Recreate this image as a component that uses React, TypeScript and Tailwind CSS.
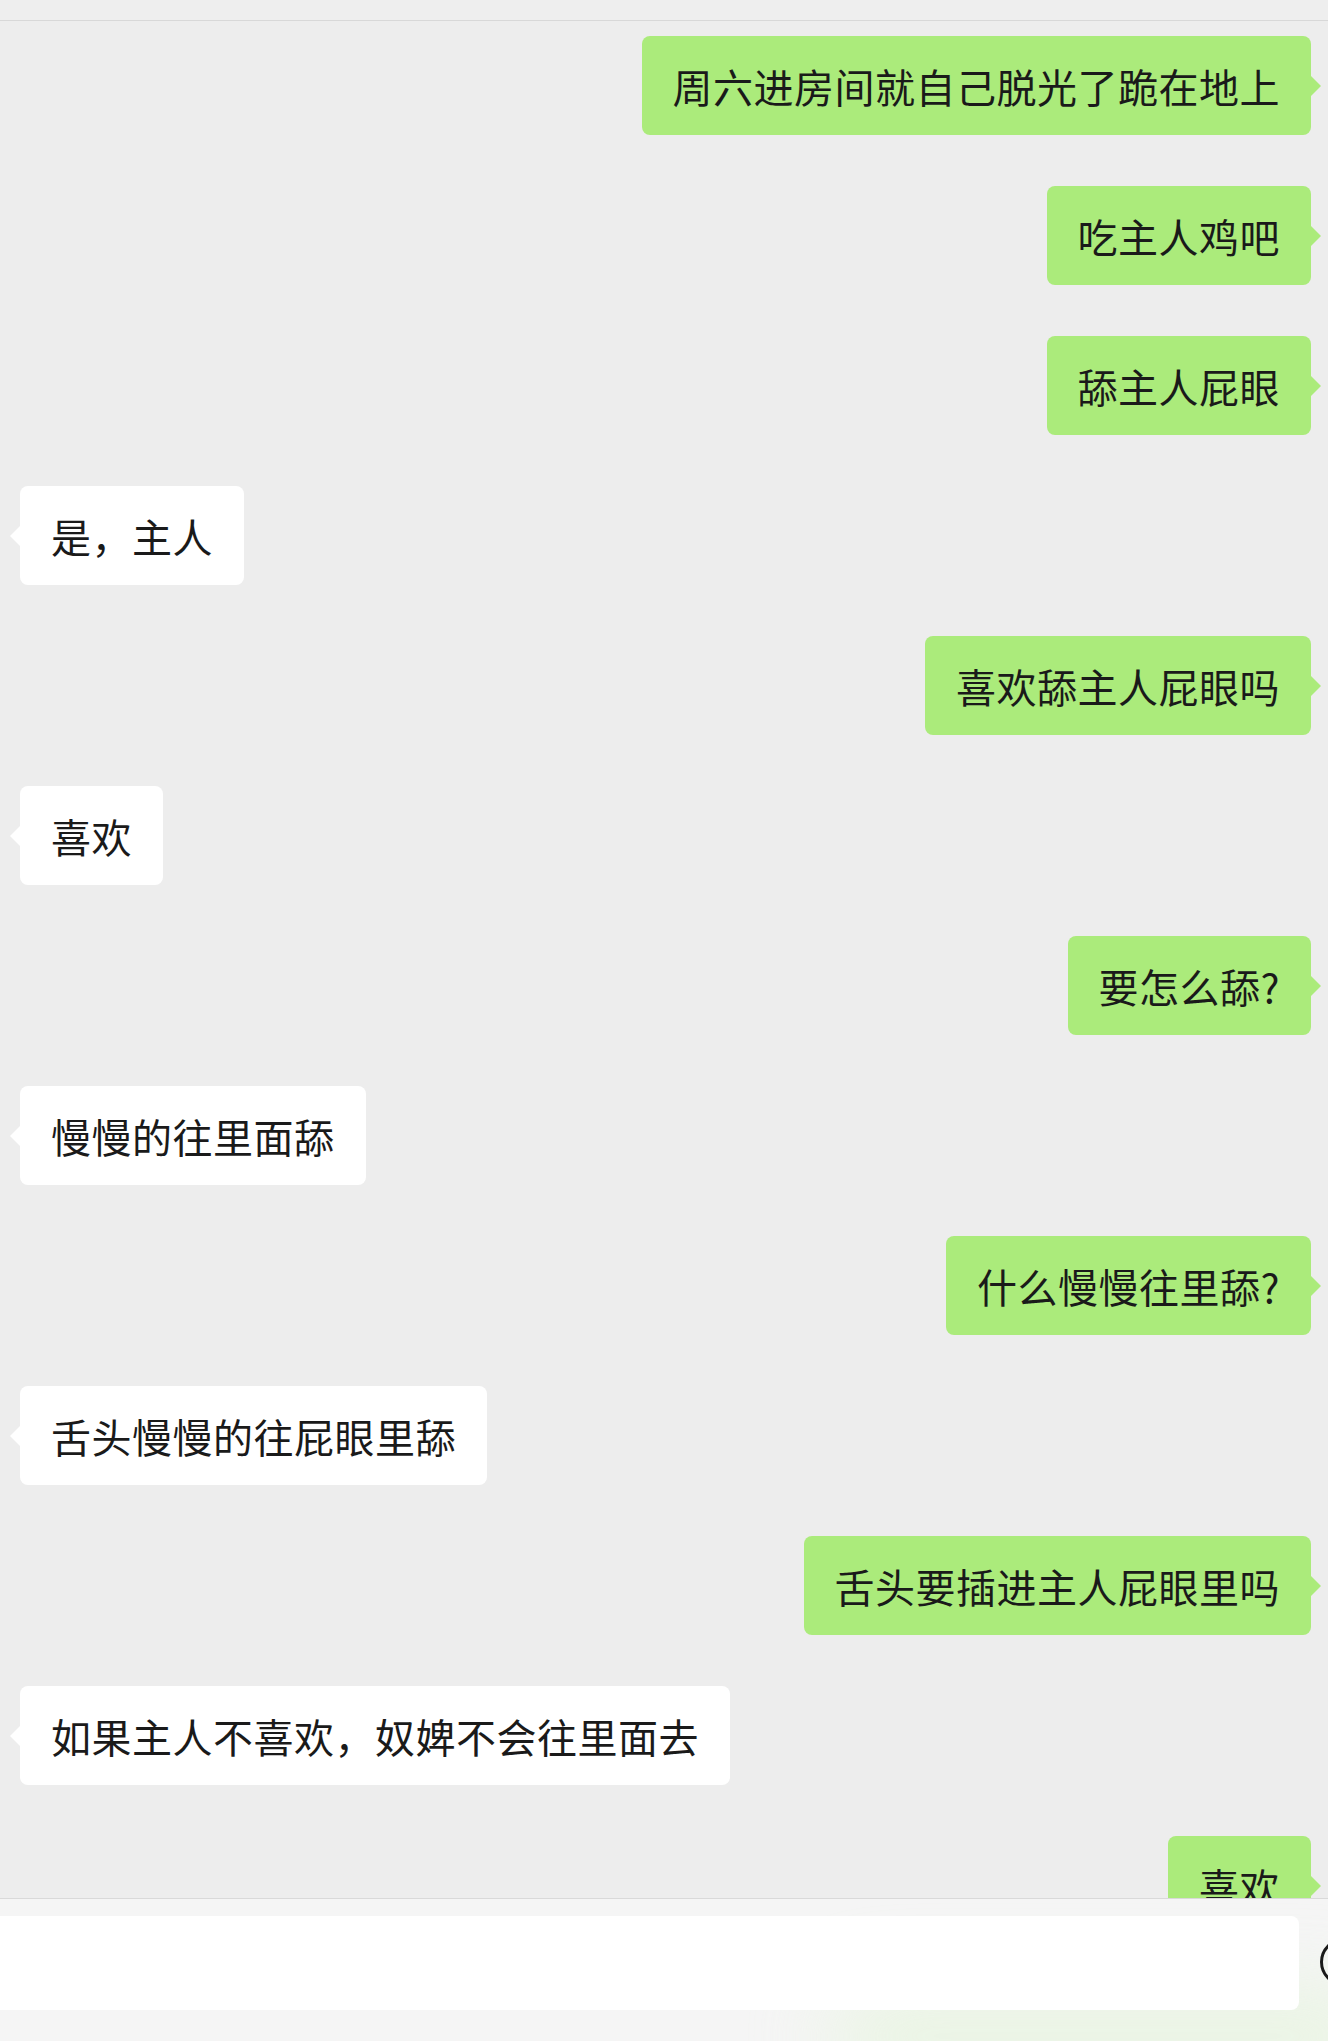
type Msg = { side: "me" | "them"; text: string };

const messages: Msg[] = [
    { side: "me", text: "周六进房间就自己脱光了跪在地上" },
    { side: "me", text: "吃主人鸡吧" },
    { side: "me", text: "舔主人屁眼" },
    { side: "them", text: "是，主人" },
    { side: "me", text: "喜欢舔主人屁眼吗" },
    { side: "them", text: "喜欢" },
    { side: "me", text: "要怎么舔?" },
    { side: "them", text: "慢慢的往里面舔" },
    { side: "me", text: "什么慢慢往里舔?" },
    { side: "them", text: "舌头慢慢的往屁眼里舔" },
    { side: "me", text: "舌头要插进主人屁眼里吗" },
    { side: "them", text: "如果主人不喜欢，奴婢不会往里面去" },
    { side: "me", text: "喜欢" },
];

function Bubble({ msg }: { msg: Msg }) {
    const mine = msg.side === "me";
    return (
        <div className={mine ? "flex justify-end pr-[17px]" : "flex justify-start pl-[20px]"}>
            <div
                className={
                    mine
                        ? "relative flex h-[99px] shrink-0 items-center rounded-[8px] bg-[#abeb7b] px-[31px]"
                        : "relative flex h-[99px] shrink-0 items-center rounded-[8px] bg-white px-[31px]"
                }
            >
                {mine ? (
                    <span className="absolute right-[-10px] top-[40px] h-0 w-0 border-y-[10px] border-l-[10px] border-y-transparent border-l-[#abeb7b]" />
                ) : (
                    <span className="absolute left-[-10px] top-[40px] h-0 w-0 border-y-[10px] border-r-[10px] border-y-transparent border-r-white" />
                )}
                <span className="whitespace-nowrap text-[40px] leading-none tracking-[0.5px] text-[#1a1a1a]">{msg.text}</span>
            </div>
        </div>
    );
}

export default function App() {
    return (
        <main
            className="flex h-[2041px] w-[1328px] flex-col overflow-hidden bg-[#ededed]"
            style={{ fontFamily: '"Noto Sans CJK SC", "Noto Sans", sans-serif' }}
        >
            <div className="h-[21px] shrink-0 border-b border-[#d8d8d8] bg-[#eeeeee]" />

            <section className="flex min-h-0 flex-1 flex-col gap-[51px] overflow-hidden pt-[15px]">
                {messages.map((m, i) => (
                    <Bubble key={i} msg={m} />
                ))}
            </section>

            <footer className="relative h-[143px] shrink-0 overflow-hidden border-t border-[#d9d9d9] bg-[#f5f5f5]">
                <div className="absolute bottom-[-40px] right-[-60px] h-[90px] w-[560px] rounded-full bg-[#e4f5da] opacity-70 blur-2xl" />
                <div className="relative flex items-start pt-[17px]">
                    <div className="h-[94px] w-[1299px] shrink-0 rounded-r-[8px] bg-white" />
                    <div className="ml-[21px] mt-[22px] h-[48px] w-[48px] shrink-0 rounded-full border-[3px] border-[#1a1a1a]" />
                </div>
            </footer>
        </main>
    );
}
